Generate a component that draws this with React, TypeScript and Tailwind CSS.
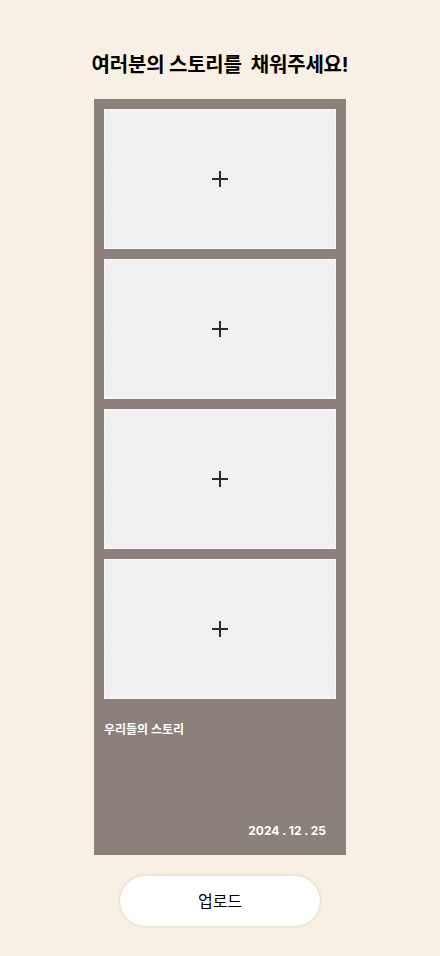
import React from 'react';

const FONT = { fontFamily: 'Inter, "Noto Sans CJK KR", "Noto Sans", sans-serif' };

function PhotoSlot() {
  return (
    <button className="flex h-[140px] w-full items-center justify-center border border-dashed border-white bg-[#f0f0f0]">
      <svg width="18" height="18" viewBox="0 0 18 18" fill="none" stroke="#2b2b2b" strokeWidth="2">
        <path d="M9 1v16M1 9h16" />
      </svg>
    </button>
  );
}

export default function App() {
  return (
    <div className="min-h-[956px] bg-[#f8efe5] flex flex-col items-center" style={FONT}>
      <h1 className="pt-[50px] text-[20px] leading-[30px] font-bold text-black whitespace-pre tracking-[-0.2px]">
        {'여러분의 스토리를  채워주세요!'}
      </h1>

      <div className="mt-[19px] w-[252px] bg-[#8b807a] p-[10px] pb-0">
        <div className="flex flex-col gap-[10px]">
          {[0, 1, 2, 3].map((i) => (
            <PhotoSlot key={i} />
          ))}
        </div>
        <div className="flex h-[156px] flex-col justify-between pt-[23px] pb-[15px]">
          <p className="text-[12px] leading-[16px] font-bold text-white">우리들의 스토리</p>
          <p className="pr-[10px] text-right text-[12px] leading-[18px] font-bold text-white">2024 . 12 . 25</p>
        </div>
      </div>

      <button className="mt-[21px] h-[50px] w-[200px] rounded-[25px] bg-white text-[16px] text-black shadow-[0_0_3px_rgba(180,160,140,0.5)]">
        업로드
      </button>
    </div>
  );
}
